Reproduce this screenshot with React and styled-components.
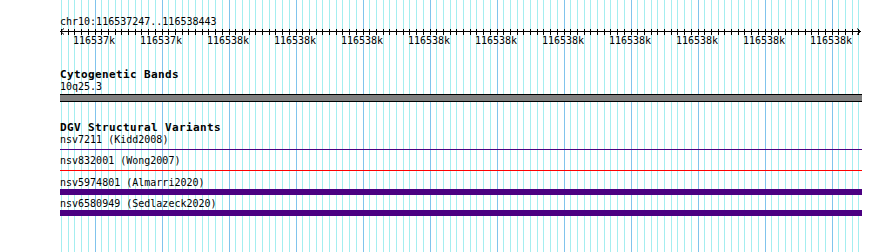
import React from 'react';
import styled, { createGlobalStyle } from 'styled-components';

const GlobalStyle = createGlobalStyle`
  body {
    margin: 0;
    background: #fff;
    font-family: "DejaVu Sans Mono", "Liberation Mono", monospace;
    font-size: 10px;
    color: #000;
  }
`;

const VIEW_LEFT = 60;
const VIEW_WIDTH = 802;
const MINOR = 6.7;
const FIRST_LINE = 61.5;
const LINE_COUNT = 120;

const linePositions = Array.from({ length: LINE_COUNT }, (_, n) => ({
  x: Math.floor(FIRST_LINE + MINOR * n),
  major: n % 10 === 5,
}));

const tickLabels = [
  '116537k', '116537k', '116538k', '116538k', '116538k', '116538k',
  '116538k', '116538k', '116538k', '116538k', '116538k', '116538k',
];

const variants = [
  { name: 'nsv7211', study: 'Kidd2008', kind: 'line', color: '#4b0082', gap: 0 },
  { name: 'nsv832001', study: 'Wong2007', kind: 'line', color: '#ff0000', gap: 0 },
  { name: 'nsv5974801', study: 'Almarri2020', kind: 'bar', color: '#4b0082', gap: 1 },
  { name: 'nsv6580949', study: 'Sedlazeck2020', kind: 'bar', color: '#4b0082', gap: 0 },
];

const Page = styled.div`
  position: relative;
  width: 890px;
  height: 252px;
  overflow: hidden;
`;

const GridLayer = styled.svg`
  position: absolute;
  top: 0;
  left: 0;
  z-index: 0;
`;

const Content = styled.div`
  position: relative;
  z-index: 1;
  width: ${VIEW_WIDTH}px;
  margin-left: ${VIEW_LEFT}px;
  display: flex;
  flex-direction: column;
`;

const Ruler = styled.div`
  display: flex;
  flex-direction: column;
  padding-top: 16px;
`;

const Location = styled.div`
  line-height: 12px;
  height: 12px;
`;

const AxisSvg = styled.svg`
  display: block;
`;

const TickRow = styled.div`
  display: flex;
  margin-left: 0.5px;
`;

const TickLabel = styled.div`
  flex: 0 0 67px;
  text-align: center;
  line-height: 12px;
`;

const Track = styled.section`
  display: flex;
  flex-direction: column;
  margin-top: ${(p) => p.$top}px;
`;

const TrackTitle = styled.div`
  font-weight: bold;
  font-size: 11px;
  letter-spacing: 0.38px;
  line-height: 12px;
  height: 12px;
`;

const FeatureLabel = styled.div`
  line-height: 12px;
  height: 12px;
`;

const BandBar = styled.div`
  margin-top: 1px;
  height: 6px;
  background: #808080;
  border-top: 1px solid #000;
  border-bottom: 1px solid #000;
`;

const Variant = styled.div`
  display: flex;
  flex-direction: column;
  height: 21px;
  margin-top: ${(p) => p.$gap}px;
`;

const Glyph = styled.div`
  height: ${(p) => (p.$kind === 'bar' ? 6 : 1)}px;
  margin-top: ${(p) => (p.$kind === 'bar' ? 0 : 3)}px;
  background: ${(p) => p.$color};
`;

const Axis = () => {
  const y = 3.5;
  return (
    <AxisSvg width={VIEW_WIDTH} height={7} shapeRendering="crispEdges">
      <line x1={0} y1={y} x2={801} y2={y} stroke="#000" />
      {linePositions.map((l, i) => (
        <line
          key={i}
          x1={l.x - VIEW_LEFT + 0.5}
          y1={0.5}
          x2={l.x - VIEW_LEFT + 0.5}
          y2={6.5}
          stroke="#000"
        />
      ))}
      <polyline points="4,0.5 0.5,3.5 4,6.5" fill="none" stroke="#000" shapeRendering="auto" />
      <polyline points="797,0.5 800.5,3.5 797,6.5" fill="none" stroke="#000" shapeRendering="auto" />
    </AxisSvg>
  );
};

const App = () => {
  return (
    <>
      <GlobalStyle />
      <Page>
        <GridLayer width={890} height={252} shapeRendering="crispEdges">
          {linePositions.map((l, i) => (
            <line
              key={i}
              x1={l.x + 0.5}
              y1={0}
              x2={l.x + 0.5}
              y2={252}
              stroke={l.major ? '#80c4ec' : '#a4eef0'}
            />
          ))}
        </GridLayer>

        <Content>
          <Ruler>
            <Location>chr10:116537247..116538443</Location>
            <Axis />
            <TickRow>
              {tickLabels.map((t, i) => (
                <TickLabel key={i}>{t}</TickLabel>
              ))}
            </TickRow>
          </Ruler>

          <Track $top={22}>
            <TrackTitle>Cytogenetic Bands</TrackTitle>
            <FeatureLabel>10q25.3</FeatureLabel>
            <BandBar />
          </Track>

          <Track $top={20}>
            <TrackTitle>DGV Structural Variants</TrackTitle>
            {variants.map((v) => (
              <Variant key={v.name} $gap={v.gap}>
                <FeatureLabel>
                  {v.name} ({v.study})
                </FeatureLabel>
                <Glyph $kind={v.kind} $color={v.color} />
              </Variant>
            ))}
          </Track>
        </Content>
      </Page>
    </>
  );
};

export default App;
